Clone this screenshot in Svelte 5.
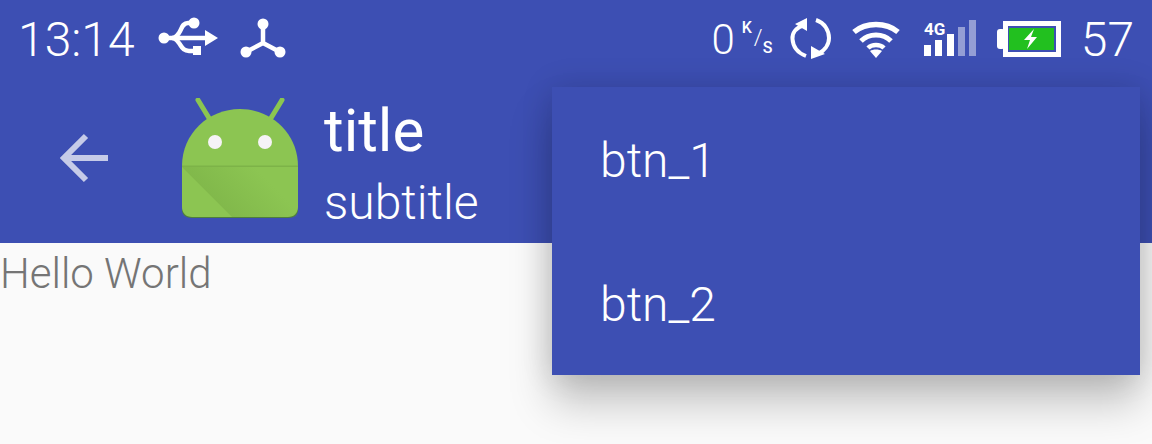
<script>
	const menu = ['btn_1', 'btn_2'];
</script>

<div class="screen">
	<div class="statusbar">
		<span class="time">13:14</span>
		<svg class="usb" width="62" height="40" viewBox="0 0 62 40">
			<circle cx="6" cy="21" r="5.5" fill="#fff" />
			<path d="M6 21H50" stroke="#fff" stroke-width="4.5" fill="none" />
			<path d="M47 13L60 21L47 29Z" fill="#fff" />
			<path d="M35 6H30C24 6 24 12 21 16C19 19 17 21 14 21C17 21 19 23 21 26C24 30 25 34 31 34H36" stroke="#fff" stroke-width="4.5" fill="none" />
			<circle cx="36" cy="6" r="5.5" fill="#fff" />
			<rect x="35" y="29" width="8" height="9" fill="#fff" />
		</svg>
		<svg class="hub" width="46" height="40" viewBox="0 0 46 40">
			<path d="M23 5V25M23 25L6 34M23 25L40 34" stroke="#fff" stroke-width="4.5" fill="none" />
			<circle cx="23" cy="6" r="5.5" fill="#fff" />
			<circle cx="6" cy="34" r="5.5" fill="#fff" />
			<circle cx="40" cy="34" r="5.5" fill="#fff" />
		</svg>

		<div class="indicators">
			<span class="speed">0</span>
			<div class="rate">
				<span class="rate-k">K</span>
				<span class="rate-slash">/</span>
				<span class="rate-s">S</span>
			</div>
			<svg class="sync" width="42" height="42" viewBox="0 0 42 42">
				<path d="M14 7C5 10 2 16 2.5 21C3 29 8 35 16 38" stroke="#fff" stroke-width="4" fill="none" />
				<path d="M26 2C35 5 39 13 39 20C39 27 34 33 28 36" stroke="#fff" stroke-width="4" fill="none" />
				<path d="M5 6L17 0V13Z" fill="#fff" />
				<path d="M21 28V41L35 36Z" fill="#fff" />
			</svg>
			<svg class="wifi" width="48" height="38" viewBox="0 0 48 38">
				<path d="M2 12C14 2 34 2 46 12" stroke="#fff" stroke-width="5.5" fill="none" />
				<path d="M9 21C17 13 31 13 39 21" stroke="#fff" stroke-width="5" fill="none" />
				<path d="M16 28C20 24 28 24 32 28" stroke="#fff" stroke-width="4.5" fill="none" />
				<path d="M18 31C21 29 27 29 30 31L24 38Z" fill="#fff" />
			</svg>
			<svg class="signal" width="53" height="40" viewBox="0 0 53 40">
				<text x="0" y="16" class="net-text">4G</text>
				<rect x="0" y="26" width="7" height="11" fill="#fff" />
				<rect x="11" y="21" width="7" height="16" fill="#fff" />
				<rect x="23" y="15" width="7" height="22" fill="#fff" />
				<rect x="34" y="8" width="7" height="29" fill="#fff" opacity=".45" />
				<rect x="45" y="1" width="7" height="36" fill="#fff" opacity=".45" />
			</svg>
			<svg class="battery" width="64" height="36" viewBox="0 0 64 36">
				<rect x="0" y="8" width="8" height="20" rx="3" fill="#fff" />
				<rect x="6" y="0" width="58" height="36" fill="#fff" />
				<rect x="11" y="5" width="48" height="26" fill="#3d4fb3" />
				<rect x="12" y="7" width="45" height="22" fill="#22c01f" />
				<path d="M37 8L27 19H33L30 28L40 16H34Z" fill="#fff" />
			</svg>
			<span class="battery-level">57</span>
		</div>
	</div>

	<div class="toolbar">
		<svg class="back" width="52" height="52" viewBox="0 0 52 52">
			<path d="M50 25H6M28 3L6 25L28 47" stroke="#c6cbe8" stroke-width="6" fill="none" />
		</svg>
		<svg class="logo" width="116" height="122" viewBox="0 0 116 122">
			<defs>
				<linearGradient id="fold" gradientUnits="userSpaceOnUse" x1="25" y1="94" x2="62" y2="58">
					<stop offset="0" stop-color="#74a942" stop-opacity=".45" />
					<stop offset="1" stop-color="#74a942" stop-opacity="0" />
				</linearGradient>
			</defs>
			<path d="M16 2L30 25M100 2L86 25" stroke="#8bc650" stroke-width="5" stroke-linecap="round" />
			<path d="M0 112C0 117 4 120 10 120H106C112 120 116 117 116 112Z" fill="#4f7f3c" />
			<path d="M0 68C0 36 26 11 58 11C90 11 116 36 116 68V109C116 115 112 119 106 119H10C4 119 0 115 0 109Z" fill="#8cc552" />
			<path d="M0 69L50 119H116V69Z" fill="url(#fold)" />
			<path d="M0 67.5H116V69H0Z" fill="#7db348" />
			<circle cx="33" cy="44" r="7" fill="#f6f3f6" />
			<circle cx="83" cy="44" r="7" fill="#f6f3f6" />
		</svg>
		<div class="titles">
			<span class="title">title</span>
			<span class="subtitle">subtitle</span>
		</div>
	</div>

	<div class="content">Hello World</div>

	<div class="menu">
		{#each menu as item}
			<div class="menu-item">{item}</div>
		{/each}
	</div>
</div>

<style>
	:global(body) {
		margin: 0;
		background: #fafafa;
	}

	.screen {
		position: relative;
		width: 1152px;
		height: 444px;
		overflow: hidden;
		background: #fafafa;
		font-family: Roboto, 'Liberation Sans', sans-serif;
	}

	.statusbar {
		display: flex;
		align-items: center;
		height: 75px;
		padding: 4px 18px 0;
		box-sizing: border-box;
		background: #3d4fb3;
		color: #fff;
	}

	.time,
	.battery-level {
		font-size: 48px;
		font-weight: 300;
		line-height: 1;
	}

	.usb {
		margin-left: 23px;
		margin-top: -5px;
	}

	.hub {
		margin-left: 20px;
		margin-top: -4px;
	}

	.indicators {
		display: flex;
		align-items: center;
		margin-left: auto;
	}

	.speed {
		font-size: 42px;
		font-weight: 300;
		line-height: 1;
	}

	.rate {
		display: grid;
		grid-template-columns: 12px 9px 12px;
		grid-template-rows: 14px 6px 14px;
		width: 33px;
		margin-left: 7px;
		margin-top: -3px;
		line-height: 14px;
		font-size: 16px;
		font-weight: 500;
	}

	.rate-k {
		grid-area: 1 / 1;
	}

	.rate-slash {
		grid-area: 1 / 2 / 4 / 2;
		align-self: center;
		font-size: 22px;
		font-weight: 300;
		line-height: 22px;
	}

	.rate-s {
		grid-area: 3 / 3;
	}

	.sync {
		margin-left: 15px;
		margin-top: -2px;
	}

	.wifi {
		margin-left: 20px;
		margin-top: -2px;
	}

	.signal {
		margin-left: 24px;
		margin-top: -2px;
	}

	.net-text {
		fill: #fff;
		font-size: 17px;
		font-weight: 700;
	}

	.battery {
		margin-left: 20px;
		margin-top: -2px;
	}

	.battery-level {
		margin-left: 20px;
	}

	.toolbar {
		display: flex;
		align-items: center;
		height: 168px;
		padding-left: 58px;
		box-sizing: border-box;
		background: #3d4fb3;
		color: #fff;
	}

	.logo {
		margin-left: 72px;
	}

	.titles {
		display: flex;
		flex-direction: column;
		gap: 7px;
		margin-left: 26px;
		padding-top: 9px;
	}

	.title {
		font-size: 60px;
		font-weight: 400;
		line-height: 72px;
	}

	.subtitle {
		font-size: 48px;
		font-weight: 300;
		line-height: 58px;
	}

	.content {
		font-size: 42px;
		font-weight: 300;
		line-height: 62px;
		color: #757575;
	}

	.menu {
		position: absolute;
		left: 552px;
		top: 87px;
		width: 588px;
		background: #3d4fb3;
		box-shadow:
			0 28px 40px rgba(0, 0, 0, 0.22),
			0 0 30px rgba(0, 0, 0, 0.14);
	}

	.menu-item {
		display: flex;
		align-items: center;
		height: 144px;
		padding: 2px 0 0 48px;
		box-sizing: border-box;
		font-size: 48px;
		font-weight: 300;
		color: #fff;
	}
</style>
